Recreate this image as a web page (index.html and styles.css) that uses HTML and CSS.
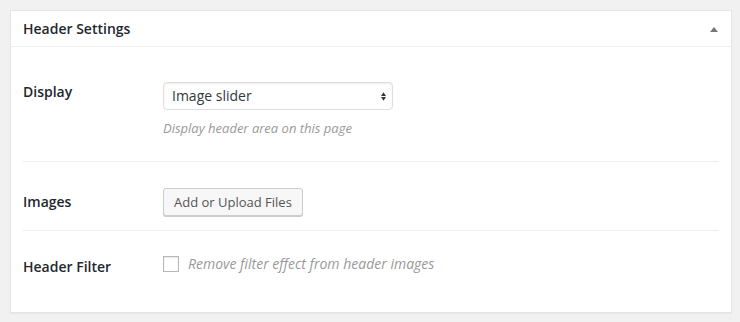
FILE: index.html
```html
<!DOCTYPE html>
<html>
<head>
<meta charset="utf-8">
<link rel="stylesheet" href="styles.css">
</head>
<body>
<div class="postbox">
  <div class="hndle">
    <h2 class="title">Header Settings</h2>
    <svg class="toggle" width="8" height="5" viewBox="0 0 8 5"><path d="M0 5 L4 0 L8 5 Z" fill="#72777c"/></svg>
  </div>
  <div class="inside">
    <div class="field field-first">
      <div class="label">Display</div>
      <div class="control">
        <div class="select-wrap">
          <select class="select"><option>Image slider</option></select>
          <svg class="select-arrows" width="5" height="9" viewBox="0 0 5 9"><path d="M0 4 L2.5 0.3 L5 4 Z M0 5 L2.5 8.7 L5 5 Z" fill="#32373c"/></svg>
        </div>
        <p class="desc">Display header area on this page</p>
      </div>
    </div>
    <div class="field field-btn">
      <div class="label">Images</div>
      <div class="control">
        <button class="button">Add or Upload Files</button>
      </div>
    </div>
    <div class="field field-check">
      <div class="label">Header Filter</div>
      <label class="control check-line">
        <span class="checkbox"></span>
        <span class="check-text">Remove filter effect from header images</span>
      </label>
    </div>
  </div>
</div>
</body>
</html>
```
FILE: styles.css
```css
html, body {
  margin: 0;
  padding: 0;
  background: #f1f1f1;
}
body {
  padding: 10px 8px 10px 10px;
  font-family: "Open Sans", "Liberation Sans", sans-serif;
  color: #23282d;
}
.postbox {
  width: 720px;
  height: 301px;
  background: #fff;
  border: 1px solid #e5e5e5;
  box-shadow: 0 1px 1px rgba(0,0,0,0.04);
}
.hndle {
  height: 35px;
  border-bottom: 1px solid #eee;
  display: flex;
  align-items: center;
  justify-content: space-between;
  padding: 0 13px 0 12px;
}
.title {
  margin: 0;
  font-size: 14px;
  font-weight: 600;
  line-height: 1.4;
  color: #23282d;
}
.toggle {
  display: block;
  margin-top: 1px;
}
.inside {
  padding: 10px 12px 0;
}
.field {
  display: flex;
  align-items: baseline;
  border-bottom: 1px solid #eee;
}
.field:last-child {
  border-bottom: none;
}
.field-first {
  align-items: flex-start;
  padding: 25px 0 23px;
}
.field-btn {
  padding: 26px 0 14px;
}
.field-check {
  padding: 23px 0 0;
}
.label {
  width: 140px;
  flex: none;
  font-size: 14px;
  font-weight: 600;
  line-height: 20px;
  color: #23282d;
}
.control {
  display: flex;
  flex-direction: column;
  align-items: flex-start;
}
.select-wrap {
  position: relative;
  width: 230px;
}
.select {
  -webkit-appearance: none;
  appearance: none;
  display: block;
  width: 230px;
  height: 28px;
  margin: 0;
  padding: 0 8px;
  border: 1px solid #ddd;
  border-radius: 4px;
  background: #fff;
  box-shadow: inset 0 1px 2px rgba(0,0,0,0.07);
  font-family: "Open Sans", "Liberation Sans", sans-serif;
  font-size: 14px;
  color: #32373c;
  line-height: 26px;
}
.select-arrows {
  position: absolute;
  right: 7px;
  top: 10px;
  display: block;
}
.desc {
  margin: 9px 0 0;
  font-size: 13px;
  font-style: italic;
  line-height: 19px;
  color: #999;
}
.button {
  height: 28px;
  padding: 0 10px;
  margin: 0;
  border: 1px solid #ccc;
  border-radius: 3px;
  background: #f7f7f7;
  box-shadow: 0 1px 0 #ccc;
  font-family: "Open Sans", "Liberation Sans", sans-serif;
  font-size: 13px;
  color: #555;
  line-height: 26px;
  white-space: nowrap;
}
.check-line {
  flex-direction: row;
  align-items: center;
}
.checkbox {
  display: block;
  width: 14px;
  height: 14px;
  border: 1px solid #b4b9be;
  background: #fff;
  box-shadow: inset 0 1px 2px rgba(0,0,0,0.1);
  margin-right: 9px;
}
.check-text {
  font-size: 14px;
  font-style: italic;
  line-height: 20px;
  color: #999;
}
```
